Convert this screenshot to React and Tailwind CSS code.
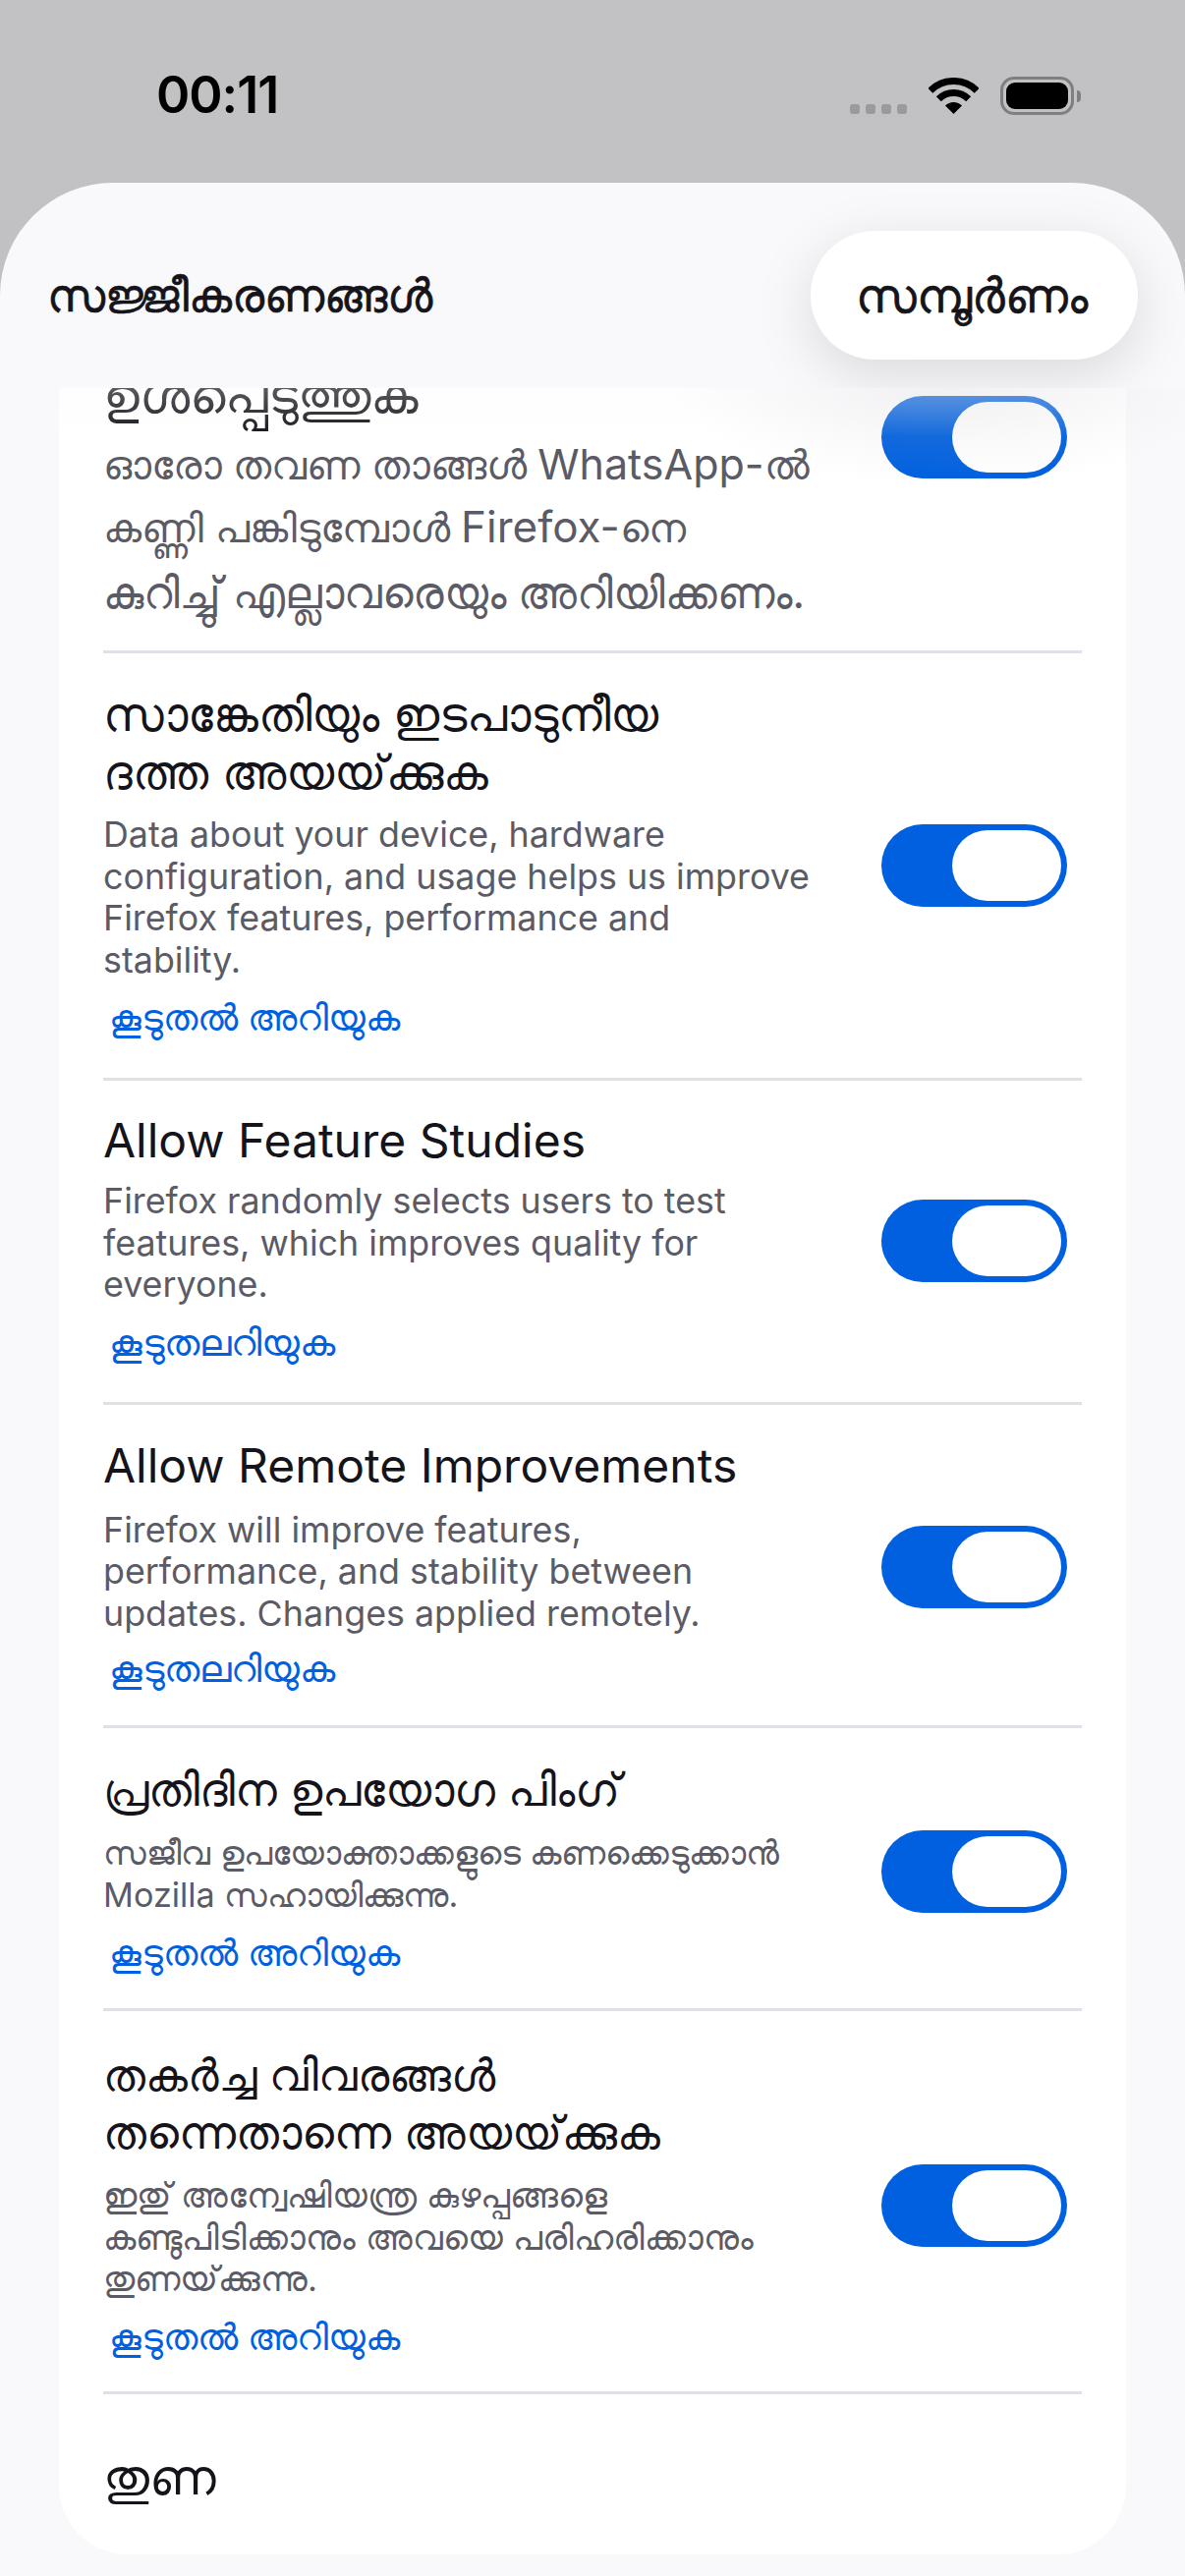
import React from 'react';

const LEARN_1 = 'കൂടുതൽ അറിയുക';
const LEARN_2 = 'കൂടുതലറിയുക';

const rows = [
  {
    title: [
      ['സാങ്കേതിയും ഇടപാടുനീയ', 'text-[48px]'],
      ['ദത്ത അയയ്\u200Cക്കുക', 'text-[48px]'],
    ],
    desc: ['Data about your device, hardware', 'configuration, and usage helps us improve', 'Firefox features, performance and', 'stability.'],
    link: LEARN_1,
    linkClass: 'mt-[8px] text-[37px]',
    gap: 'mt-[13px]',
    size: 'text-[35.8px]',
    pt: 'pt-[32px]',
    pb: 'pb-[32px]',
  },
  {
    title: [['Allow Feature Studies', 'text-[48px]']],
    desc: ['Firefox randomly selects users to test', 'features, which improves quality for', 'everyone.'],
    link: LEARN_2,
    linkClass: 'mt-[8px] text-[38px]',
    gap: 'mt-[11px]',
    size: 'text-[35.8px]',
    pt: 'pt-[31px]',
    pb: 'pb-[31px]',
  },
  {
    title: [['Allow Remote Improvements', 'text-[48px]']],
    desc: ['Firefox will improve features,', 'performance, and stability between', 'updates. Changes applied remotely.'],
    link: LEARN_2,
    linkClass: 'mt-[6px] text-[38px]',
    gap: 'mt-[15px]',
    size: 'text-[35.8px]',
    pt: 'pt-[32px]',
    pb: 'pb-[28px]',
  },
  {
    title: [['പ്രതിദിന ഉപയോഗ പിംഗ്', 'text-[45.5px]']],
    desc: ['സജീവ ഉപയോക്താക്കളുടെ കണക്കെടുക്കാൻ', 'Mozilla സഹായിക്കുന്നു.'],
    link: LEARN_1,
    linkClass: 'mt-[8px] text-[37px]',
    gap: 'mt-[14px]',
    size: 'text-[34.2px]',
    pt: 'pt-[33px]',
    pb: 'pb-[27px]',
  },
  {
    title: [
      ['തകർച്ച വിവരങ്ങൾ', 'text-[45px]'],
      ['തന്നെതാന്നെ അയയ്\u200Cക്കുക', 'text-[46px]'],
    ],
    desc: ['ഇതു് അന്വേഷിയന്ത്ര കുഴപ്പങ്ങളെ', 'കണ്ടുപിടിക്കാനും അവയെ പരിഹരിക്കാനും', 'തുണയ്\u200Cക്കുന്നു.'],
    link: LEARN_1,
    linkClass: 'mt-[8px] text-[37px]',
    gap: 'mt-[13px]',
    size: 'text-[34.8px]',
    pt: 'pt-[35px]',
    pb: 'pb-[26px]',
  },
];

function Toggle() {
  return (
    <div className="w-[189px] h-[84px] shrink-0 rounded-full bg-[#0060df] flex items-center justify-end pr-[6px]">
      <div className="w-[111px] h-[72px] rounded-full bg-white" />
    </div>
  );
}

function Row({ title, desc, link, linkClass, gap, size, pt, pb }) {
  return (
    <div className={`flex items-center justify-between border-b-[3px] border-[#e0e0e6] pr-[15px] ${pt} ${pb}`}>
      <div className="w-[760px]">
        {title.map(([t, cls]) => (
          <div key={t} className={`${cls} leading-[59px] text-[#15141a] whitespace-nowrap`}>{t}</div>
        ))}
        <div className={gap}>
          {desc.map((d) => (
            <div key={d} className={`${size} leading-[42.5px] text-[#5b5b66] whitespace-nowrap`}>{d}</div>
          ))}
        </div>
        <div className={`pl-[6px] leading-[59px] text-[#0060df] whitespace-nowrap ${linkClass}`}>{link}</div>
      </div>
      <Toggle />
    </div>
  );
}

export default function App() {
  return (
    <div className="w-[1206px] h-[2622px] overflow-hidden flex flex-col bg-gradient-to-b from-[#c2c2c4] to-[#bcbcbe] font-['Inter','Noto_Sans','DejaVu_Sans',sans-serif]">
      {/* status bar */}
      <div className="h-[186px] shrink-0 flex items-start justify-between pl-[159px] pr-[106px] pt-[70px]">
        <div className="text-[52px] leading-[54px] font-semibold text-black tracking-[-1px]">00:11</div>
        <div className="flex items-start mt-[8px]">
          <div className="flex gap-[6px] mt-[28px]">
            <div className="w-[10px] h-[10px] rounded-[3px] bg-[#9a9a9c]" />
            <div className="w-[10px] h-[10px] rounded-[3px] bg-[#9a9a9c]" />
            <div className="w-[10px] h-[10px] rounded-[3px] bg-[#9a9a9c]" />
            <div className="w-[10px] h-[10px] rounded-[3px] bg-[#9a9a9c]" />
          </div>
          <svg className="ml-[22px] mt-[1px]" width="51" height="37" viewBox="0 0 51 37" fill="none">
            <path d="M1.8 13.3A33.5 33.5 0 0 1 49.2 13.3" stroke="#000" strokeWidth="7" />
            <path d="M10.3 21.8A21.5 21.5 0 0 1 40.7 21.8" stroke="#000" strokeWidth="7" />
            <path d="M17 28.5A12 12 0 0 1 34 28.5L25.5 37Z" fill="#000" />
          </svg>
          <div className="ml-[22px] w-[75px] h-[39px] rounded-[14px] border-[3px] border-[#7f7f81] p-[3px]">
            <div className="w-full h-full rounded-[9px] bg-black" />
          </div>
          <div className="ml-[3px] mt-[14px] w-[4px] h-[12px] rounded-r-full bg-[#7f7f81]" />
        </div>
      </div>

      {/* sheet */}
      <div className="flex-1 min-h-0 flex flex-col rounded-t-[115px] bg-[#f9f9fb] overflow-hidden">
        <div className="h-[209px] shrink-0 overflow-hidden flex items-center justify-between pl-[48px] pr-[48px] pt-[20px]">
          <div className="text-[46px] font-medium text-[#15141a] [-webkit-text-stroke:0.7px_#15141a] whitespace-nowrap">സജ്ജീകരണങ്ങൾ</div>
          <div className="w-[333px] h-[131px] pr-[5px] rounded-[65px] bg-white flex items-center justify-center shadow-[0_16px_60px_rgba(0,0,0,0.13)] text-[48px] font-medium text-[#15141a] [-webkit-text-stroke:0.7px_#15141a] whitespace-nowrap">
            സമ്പൂർണം
          </div>
        </div>

        <div className="relative flex-1 min-h-0 overflow-hidden pb-[22px]">
          <div className="h-full mx-[60px] bg-white rounded-b-[70px] overflow-hidden pl-[45px] pr-[45px]">
            {/* first row is scrolled under the header */}
            <div className="flex items-start justify-between border-b-[3px] border-[#e0e0e6] mt-[-55px] pt-[32px] pb-[25px] pr-[15px]">
              <div className="w-[760px]">
                <div className="text-[51px] leading-[59px] text-[#15141a] whitespace-nowrap">ഉൾപ്പെടുത്തുക</div>
                <div className="mt-[5px] text-[#5b5b66] whitespace-nowrap">
                  <div className="h-[67px] pt-[3px] text-[40.5px] leading-[67px]">ഓരോ തവണ താങ്ങൾ <span className="text-[43px]">WhatsApp-</span>ൽ</div>
                  <div className="h-[67px] text-[41px] leading-[67px]">കണ്ണി പങ്കിടുമ്പോൾ <span className="text-[44px]">Firefox-</span>നെ</div>
                  <div className="h-[67px] text-[43.5px] leading-[67px]">കുറിച്ചു് എല്ലാവരെയും അറിയിക്കണം.</div>
                </div>
              </div>
              <div className="mt-[31px]">
                <Toggle />
              </div>
            </div>

            {rows.map((r) => (
              <Row key={r.title[0][0]} {...r} />
            ))}

            <div className="pt-[54px] text-[51px] leading-[59px] text-[#15141a]">തുണ</div>
          </div>
          {/* glass fade below the header, stronger under the button shadow */}
          <div className="absolute top-0 left-0 right-0 h-[50px] bg-gradient-to-b from-[#f9f9fb]/30 to-transparent" />
          <div className="absolute top-0 right-[-40px] w-[560px] h-[100px] bg-[radial-gradient(ellipse_at_top,rgba(190,190,196,0.2),transparent_70%)]" />
        </div>
      </div>
    </div>
  );
}
